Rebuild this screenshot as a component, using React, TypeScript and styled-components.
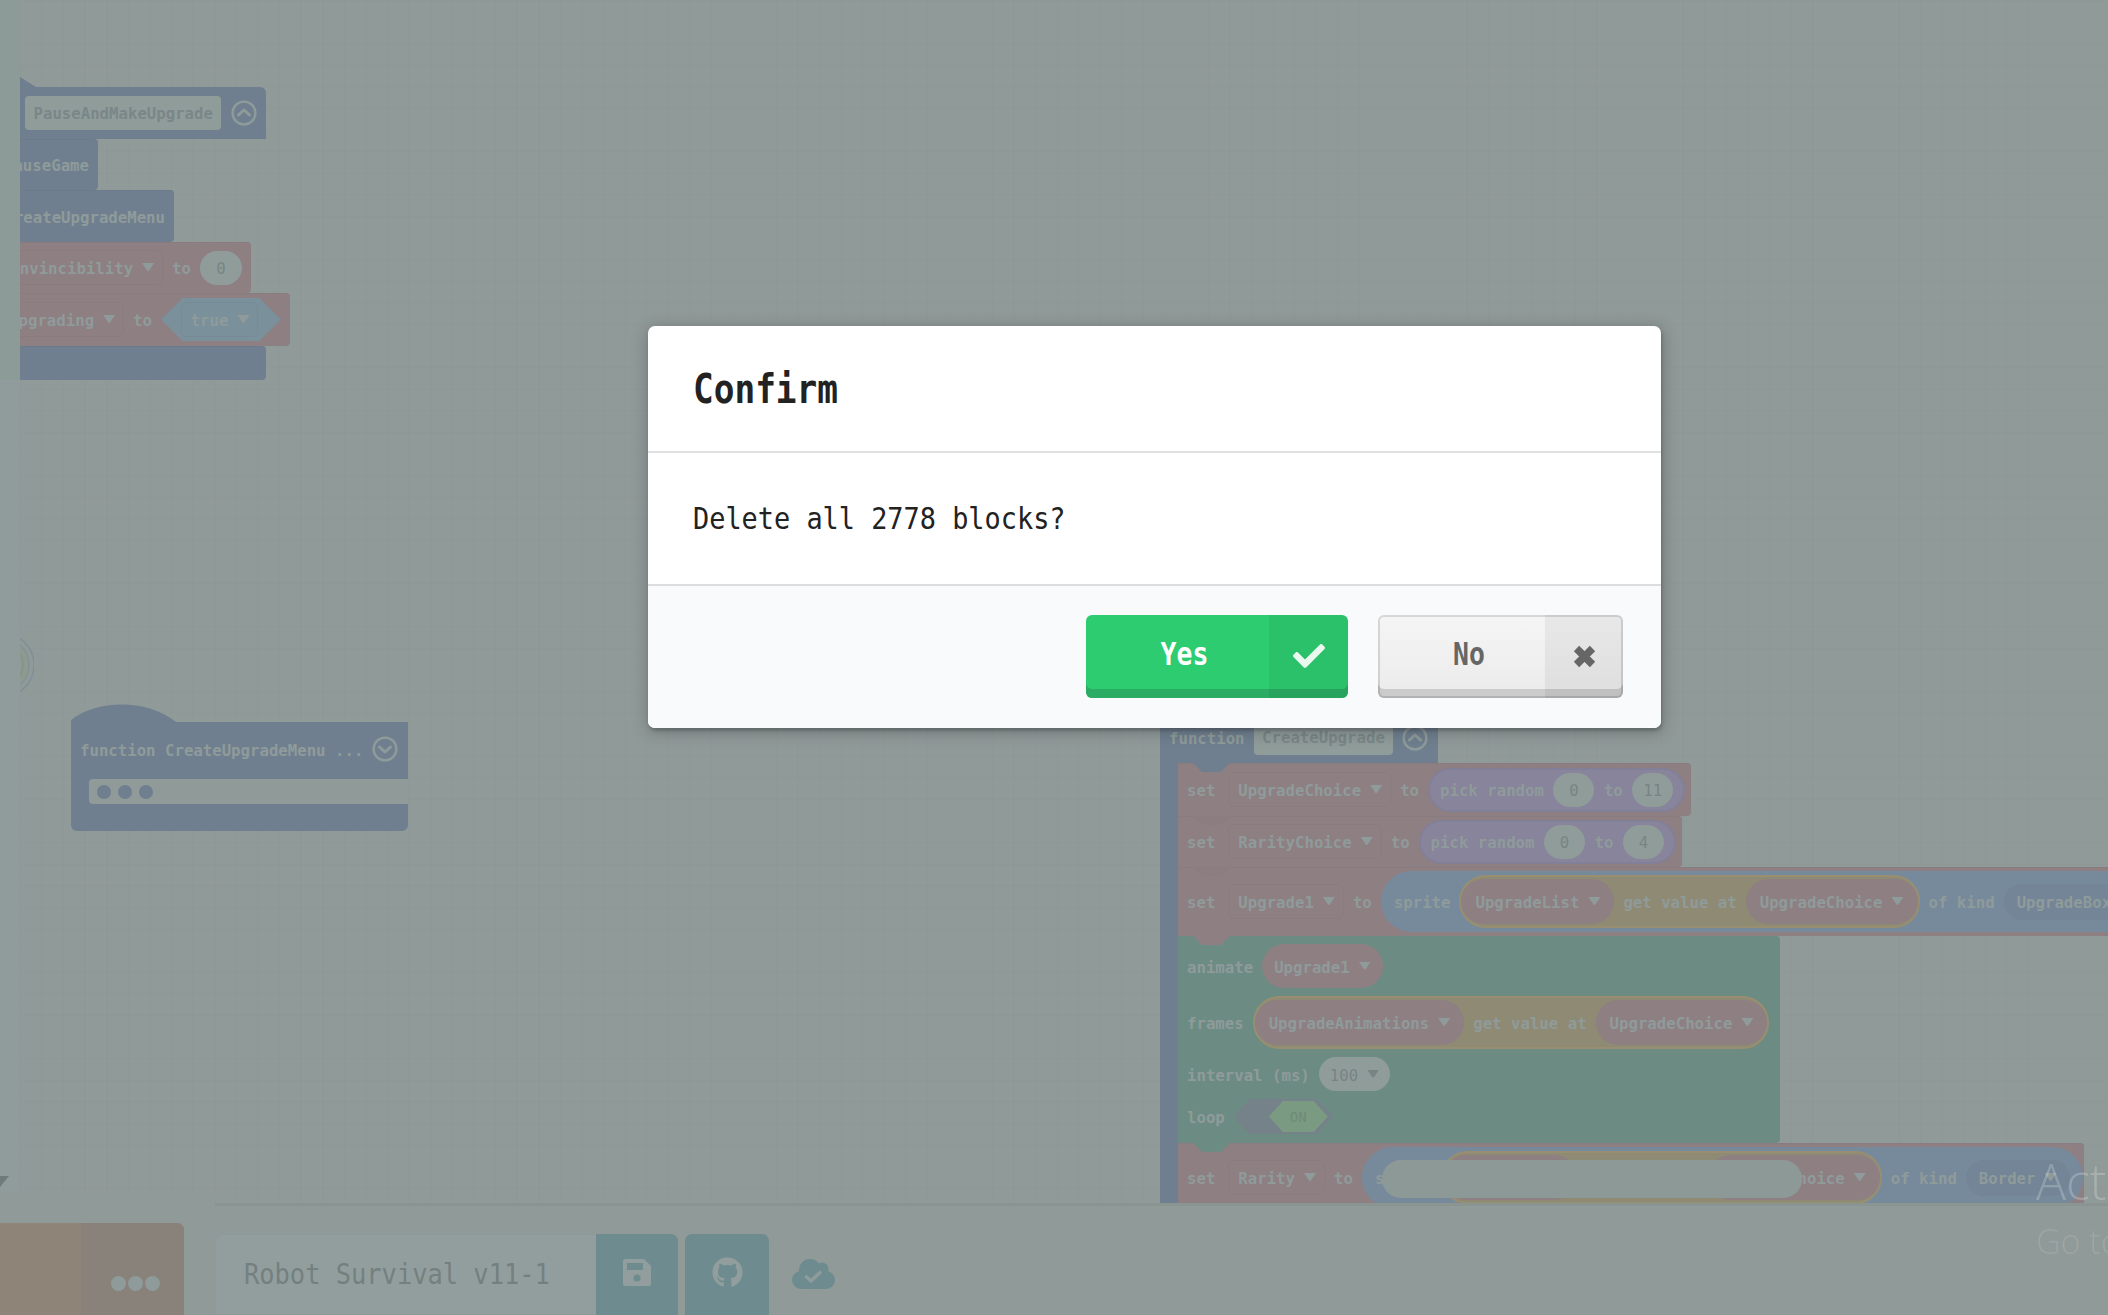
import React from 'react';
import styled, { createGlobalStyle } from 'styled-components';
import { FaCheck, FaGithub } from 'react-icons/fa';

const C = {
  bg: '#909a98',
  blue: '#6f7f8f',
  red: '#8e7f83',
  redEdge: '#8c7d81',
  teal: '#6c8b83',
  yellow: '#8f8a74',
  yellowEdge: '#988f72',
  purple: '#87849b',
  purpleEdge: '#827f98',
  sprite: '#778a9b',
  spriteDark: '#738596',
  hex: '#7a909a',
  field: '#909c9a',
  text: '#8f9b9a',
  textDark: '#788483',
  btn: '#6e8c8f',
};

const Global = createGlobalStyle`
  html, body { margin: 0; padding: 0; background: ${C.bg}; overflow: hidden; }
`;

const Page = styled.div`
  position: relative;
  width: 2108px;
  height: 1315px;
  overflow: hidden;
  display: flex;
  flex-direction: column;
  background: ${C.bg};
`;

const Workspace = styled.div`
  position: relative;
  display: flex;
  height: 1203px;
  flex-shrink: 0;
`;

const Strip = styled.div`
  width: 20px;
  flex-shrink: 0;
  display: flex;
  flex-direction: column;
`;
const StripTop = styled.div`
  height: 380px;
  background: #8d9b98;
`;
const StripBottom = styled.div`
  flex: 1;
  background: #8f9c9b;
`;
const Corner = styled.div`
  position: absolute;
  left: 0;
  top: 1176px;
  width: 9px;
  height: 11px;
  background: #707a7a;
  clip-path: polygon(0 0, 100% 0, 0 100%);
`;

const Canvas = styled.div`
  position: relative;
  flex: 1;
  overflow: hidden;
  font: bold 15.7px "DejaVu Sans Mono", monospace;
  color: ${C.text};
  background-color: ${C.bg};
  background-image: linear-gradient(rgba(0, 0, 0, 0.014) 1px, transparent 1px),
    linear-gradient(90deg, rgba(0, 0, 0, 0.014) 1px, transparent 1px);
  background-size: 21.6px 21.6px;
`;

const Placed = styled.div<{ $x: number; $y: number }>`
  position: absolute;
  left: ${p => p.$x}px;
  top: ${p => p.$y}px;
  display: flex;
  flex-direction: column;
  align-items: flex-start;
`;

const Head = styled.div<{ $h: number }>`
  position: relative;
  display: flex;
  align-items: center;
  gap: 9px;
  height: ${p => p.$h}px;
  padding: 0 10px 0 9px;
  background: ${C.blue};
  border-radius: 0 6px 0 0;
  white-space: nowrap;
`;
const HeadFlush = styled(Head)`
  padding-left: 5px;
  padding-right: 9px;
  gap: 10px;
`;
const HatTip = styled.div`
  position: absolute;
  left: 0;
  top: -10px;
  width: 16px;
  height: 10px;
  background: ${C.blue};
  clip-path: polygon(0 0, 100% 100%, 0 100%);
`;
const HatSvg = styled.svg`
  position: absolute;
  left: 0;
  top: -18px;
  display: block;
`;

const NameField = styled.span`
  display: flex;
  align-items: center;
  height: 34px;
  padding: 0 8.5px;
  background: ${C.field};
  border-radius: 4px;
  color: #7a8688;
`;

const ToggleSvg = styled.svg`
  flex-shrink: 0;
  display: block;
`;

function Toggle({ down }: { down?: boolean }) {
  return (
    <ToggleSvg width="26" height="26" viewBox="0 0 26 26" fill="none" stroke={C.text} strokeWidth="2.4" strokeLinecap="round" strokeLinejoin="round">
      <circle cx="13" cy="13" r="11.4" />
      <path d={down ? 'M7.5 11l5.5 5 5.5-5' : 'M7.5 15l5.5-5 5.5 5'} strokeWidth="3" />
    </ToggleSvg>
  );
}

const Stmt = styled.div<{ $c: string; $h: number; $w?: number; $end?: boolean }>`
  position: relative;
  display: flex;
  align-items: center;
  justify-content: ${p => (p.$end ? 'flex-end' : 'flex-start')};
  gap: 9px;
  flex-shrink: 0;
  height: ${p => p.$h}px;
  width: ${p => (p.$w ? `${p.$w}px` : 'fit-content')};
  padding: ${p => (p.$end ? '0 9px 0 0' : '0 6px 0 9px')};
  box-sizing: border-box;
  background: ${p => p.$c};
  border-radius: 0 4px 4px 0;
  box-shadow: inset 0 1px 0 rgba(0, 0, 0, 0.03);
  white-space: nowrap;
`;

const Notch = styled.div<{ $c: string }>`
  position: absolute;
  left: 15px;
  top: 0;
  width: 37px;
  height: 9px;
  background: ${p => p.$c};
  clip-path: polygon(0 0, 100% 0, 75% 100%, 25% 100%);
`;

const Lbl = styled.span`
  flex-shrink: 0;
  padding-top: 2px;
`;
const DarkLbl = styled(Lbl)`
  color: ${C.textDark};
  font-weight: normal;
`;

const Caret = styled.span<{ $dark?: boolean }>`
  flex-shrink: 0;
  width: 12px;
  height: 8px;
  margin-top: -1px;
  background: ${p => (p.$dark ? C.textDark : C.text)};
  clip-path: polygon(0 0, 100% 0, 55% 100%, 45% 100%);
`;

const Drop = styled.span`
  display: flex;
  align-items: center;
  gap: 9px;
  flex-shrink: 0;
  height: 35px;
  padding: 0 8px 0 9px;
  margin-left: 4px;
  box-sizing: border-box;
  border: 1px solid rgba(0, 0, 0, 0.03);
  border-radius: 6px;
`;
const HexDrop = styled(Drop)`
  margin: 0 3px 0 0;
`;

const Pill = styled.span<{ $bg: string; $h: number; $edge?: string; $pad?: number; $gap?: number }>`
  display: flex;
  align-items: center;
  gap: ${p => p.$gap ?? 9}px;
  flex-shrink: 0;
  height: ${p => p.$h}px;
  padding: 0 ${p => p.$pad ?? 14}px;
  box-sizing: border-box;
  background: ${p => p.$bg};
  border: ${p => (p.$edge ? `2px solid ${p.$edge}` : 'none')};
  border-radius: ${p => p.$h / 2}px;
`;

const Num = styled.span<{ $w?: number }>`
  display: flex;
  align-items: center;
  justify-content: center;
  flex-shrink: 0;
  width: ${p => p.$w ?? 41}px;
  height: 34px;
  padding-top: 1px;
  box-sizing: border-box;
  background: ${C.field};
  border-radius: 17px;
  color: ${C.textDark};
  font-weight: normal;
`;

const HexPill = styled.span`
  display: flex;
  align-items: center;
  justify-content: center;
  flex-shrink: 0;
  width: 120px;
  height: 43px;
  background: ${C.hex};
  clip-path: polygon(0 50%, 18% 0, 82% 0, 100% 50%, 82% 100%, 18% 100%);
`;

const Spine = styled.div`
  border-left: 18px solid ${C.blue};
  display: flex;
  flex-direction: column;
  align-items: flex-start;
`;

const TealBlock = styled.div`
  position: relative;
  display: flex;
  flex-direction: column;
  gap: 8px;
  padding: 8px 11px 9px 9px;
  background: ${C.teal};
  border-radius: 0 4px 4px 0;
`;
const TealRow = styled.div<{ $h: number }>`
  display: flex;
  align-items: center;
  gap: 9px;
  height: ${p => p.$h}px;
  white-space: nowrap;
`;

const LoopToggle = styled.span`
  position: relative;
  display: block;
  flex-shrink: 0;
  width: 99px;
  height: 35px;
  background: #76828a;
  clip-path: polygon(0 50%, 16% 0, 84% 0, 100% 50%, 84% 100%, 16% 100%);
`;
const LoopKnob = styled.span`
  position: absolute;
  left: 35px;
  top: 2px;
  width: 59px;
  height: 31px;
  display: flex;
  align-items: center;
  justify-content: center;
  background: #7a9b82;
  color: #6f8a78;
  font-weight: normal;
  font-size: 14px;
  clip-path: polygon(0 50%, 24% 0, 76% 0, 100% 50%, 76% 100%, 24% 100%);
`;

const Bubble = styled.div`
  position: absolute;
  left: 204px;
  top: 17px;
  width: 420px;
  height: 38px;
  border-radius: 19px;
  background: #8d9997;
`;

const Collapsed = styled.div`
  display: flex;
  flex-direction: column;
  width: 337px;
  background: ${C.blue};
  border-radius: 0 0 6px 6px;
`;
const CollapsedHead = styled(Head)`
  box-sizing: border-box;
  padding-bottom: 3px;
`;
const CollapsedGap = styled.div`
  display: flex;
  align-items: center;
  gap: 7px;
  margin-left: 18px;
  height: 25px;
  padding-left: 8px;
  background: ${C.bg};
  border-radius: 4px 0 0 4px;
`;
const Dot = styled.span`
  width: 14px;
  height: 14px;
  border-radius: 50%;
  background: ${C.blue};
`;
const Tail = styled.div`
  height: 27px;
`;

const LeftRing = styled.svg`
  position: absolute;
  left: 0;
  top: 638px;
  display: block;
`;

const Footer = styled.div`
  flex: 1;
  display: flex;
  min-height: 0;
`;
const LeftTools = styled.div`
  position: relative;
  width: 215px;
  flex-shrink: 0;
  margin-top: -11px;
  padding-top: 31px;
  box-sizing: border-box;
  background: ${C.bg};
`;
const OrangeButton = styled.div`
  display: flex;
  width: 184px;
  height: 92px;
  border-radius: 0 7px 0 0;
  overflow: hidden;
  background: #8e8478;
`;
const OrangeMain = styled.div`
  width: 81px;
  flex-shrink: 0;
`;
const OrangeMore = styled.div`
  flex: 1;
  display: flex;
  justify-content: center;
  gap: 2px;
  padding: 53px 0 0 6px;
  background: #88827b;
`;
const MoreDot = styled.span`
  width: 15px;
  height: 15px;
  border-radius: 50%;
  background: #8e9b9a;
`;

const Bar = styled.div`
  flex: 1;
  display: flex;
  align-items: stretch;
  padding-top: 28px;
  border-top: 3px solid #8a9491;
`;
const NameInput = styled.div`
  display: flex;
  align-items: center;
  width: 381px;
  padding-left: 28px;
  box-sizing: border-box;
  background: #929e9d;
  border: 1px solid rgba(0, 0, 0, 0.025);
  border-right: none;
  border-radius: 8px 0 0 0;
`;
const NameText = styled.span`
  display: inline-block;
  font: 28px "DejaVu Sans Mono", monospace;
  color: #748080;
  transform: scaleX(0.907);
  transform-origin: left center;
  white-space: nowrap;
`;
const ToolButton = styled.div<{ $w: number; $gap?: number; $round?: string }>`
  display: flex;
  align-items: center;
  justify-content: center;
  width: ${p => p.$w}px;
  margin-left: ${p => p.$gap ?? 0}px;
  padding-bottom: 5px;
  box-sizing: border-box;
  background: ${C.btn};
  color: #929e9d;
  border-radius: ${p => p.$round ?? '0 7px 0 0'};
`;
const CloudBox = styled.div`
  display: flex;
  align-items: center;
  margin-left: 23px;
  padding-bottom: 2px;
`;

const Watermark = styled.div`
  position: absolute;
  left: 2036px;
  top: 1147px;
  width: 900px;
  font-family: "Open Sans", sans-serif;
  font-weight: 300;
`;
const WatermarkTitle = styled.div`
  font-size: 50px;
  line-height: 68px;
  color: rgba(255, 255, 255, 0.22);
`;
const WatermarkSub = styled.div`
  margin-top: 3px;
  font-size: 34px;
  line-height: 46px;
  color: rgba(255, 255, 255, 0.13);
`;

const DialogWrap = styled.div`
  position: absolute;
  left: 0;
  top: 0;
  width: 100%;
  height: 100%;
`;
const Dialog = styled.div`
  position: absolute;
  left: 648px;
  top: 326px;
  width: 1013px;
  height: 402px;
  display: flex;
  flex-direction: column;
  background: #fff;
  border-radius: 7px;
  overflow: hidden;
  box-shadow: 1px 3px 3px 0 rgba(34, 36, 38, 0.25), 1px 3px 15px 2px rgba(34, 36, 38, 0.25);
`;
const DialogHeader = styled.div`
  display: flex;
  align-items: center;
  height: 125px;
  padding-left: 45px;
  flex-shrink: 0;
  border-bottom: 2px solid #e0e1e2;
`;
const Title = styled.span`
  display: inline-block;
  font: bold 40px "DejaVu Sans Mono", monospace;
  color: #222;
  transform: scaleX(0.86);
  transform-origin: left center;
`;
const DialogBody = styled.div`
  display: flex;
  align-items: center;
  height: 131px;
  padding-left: 45px;
  flex-shrink: 0;
`;
const Message = styled.span`
  display: inline-block;
  font: 29.5px "DejaVu Sans Mono", monospace;
  color: #222;
  transform: scaleX(0.912);
  transform-origin: left center;
  white-space: nowrap;
`;
const DialogFooter = styled.div`
  flex: 1;
  display: flex;
  justify-content: flex-end;
  gap: 30px;
  padding: 29px 38px 0 0;
  background: #f9fafb;
  border-top: 2px solid #dcddde;
`;
const ActionButton = styled.div<{ $w: number; $variant: 'yes' | 'no' }>`
  display: flex;
  width: ${p => p.$w}px;
  height: 83px;
  border-radius: 6px;
  overflow: hidden;
  color: ${p => (p.$variant === 'yes' ? '#fff' : '#666')};
  background: ${p => (p.$variant === 'yes' ? '#2ecc71' : 'linear-gradient(#f5f5f5, #ebebeb)')};
  box-shadow: ${p =>
    p.$variant === 'yes'
      ? 'inset 0 -9px 0 #2bac64'
      : 'inset 0 0 0 2px rgba(0, 0, 0, 0.12), inset 0 -9px 0 #cbcbcb'};
`;
const ActionLabel = styled.div`
  flex: 1;
  display: flex;
  align-items: center;
  justify-content: center;
  padding: 0 0 5px 14px;
`;
const ActionText = styled.span`
  display: inline-block;
  font: bold 31.5px "DejaVu Sans Mono", monospace;
  transform: scaleX(0.84);
`;
const ActionIcon = styled.div<{ $w: number; $c: string }>`
  display: flex;
  align-items: center;
  justify-content: center;
  width: ${p => p.$w}px;
  padding-bottom: 1px;
  background: rgba(0, 0, 0, 0.05);
  color: ${p => p.$c};
`;

function VarPill({ name }: { name: string }) {
  return (
    <Pill $bg={C.red} $h={45}>
      <Lbl>{name}</Lbl>
      <Caret />
    </Pill>
  );
}

function DropField({ name }: { name: string }) {
  return (
    <Drop>
      <Lbl>{name}</Lbl>
      <Caret />
    </Drop>
  );
}

function PickRandom({ max }: { max: string }) {
  return (
    <Pill $bg={C.purple} $edge={C.purpleEdge} $h={44} $pad={10} $gap={9.5}>
      <Lbl>pick random</Lbl>
      <Num>0</Num>
      <Lbl>to</Lbl>
      <Num>{max}</Num>
    </Pill>
  );
}

function GetValue({ list, index }: { list: string; index: string }) {
  return (
    <Pill $bg={C.yellow} $edge={C.yellowEdge} $h={53} $pad={0} $gap={9}>
      <VarPill name={list} />
      <Lbl>get value at</Lbl>
      <VarPill name={index} />
    </Pill>
  );
}

function SpriteOf({ list, index, kind }: { list: string; index: string; kind: string }) {
  return (
    <Pill $bg={C.sprite} $h={61} $pad={13} $gap={9}>
      <Lbl>sprite</Lbl>
      <GetValue list={list} index={index} />
      <Lbl>of kind</Lbl>
      <Pill $bg={C.spriteDark} $h={36} $pad={13}>
        <Lbl>{kind}</Lbl>
        <Caret />
      </Pill>
    </Pill>
  );
}

export default function App() {
  return (
    <Page>
      <Global />
      <Workspace>
        <Strip>
          <StripTop />
          <StripBottom />
        </Strip>
        <Canvas>
          <Placed $x={0} $y={87}>
            <HeadFlush $h={52}>
              <HatTip />
              <NameField>PauseAndMakeUpgrade</NameField>
              <Toggle />
            </HeadFlush>
            <Stmt $c={C.blue} $h={51} $w={78} $end>
              <Lbl>pauseGame</Lbl>
            </Stmt>
            <Stmt $c={C.blue} $h={52} $w={154} $end>
              <Lbl>CreateUpgradeMenu</Lbl>
            </Stmt>
            <Stmt $c={C.red} $h={51} $w={231} $end>
              <DropField name="Invincibility" />
              <Lbl>to</Lbl>
              <Num $w={42}>0</Num>
            </Stmt>
            <Stmt $c={C.red} $h={53} $w={270} $end>
              <DropField name="Upgrading" />
              <Lbl>to</Lbl>
              <HexPill>
                <HexDrop>
                  <Lbl>true</Lbl>
                  <Caret />
                </HexDrop>
              </HexPill>
            </Stmt>
            <Stmt $c={C.blue} $h={34} $w={246} $end />
          </Placed>

          <LeftRing width="14" height="54" viewBox="0 0 14 54" fill="none">
            <circle cx="-18" cy="27" r="32" stroke="#7f9098" strokeWidth="1.5" />
            <circle cx="-18" cy="27" r="27" fill="#8e9a8e" stroke="#82929a" strokeWidth="1.5" />
            <circle cx="-18" cy="27" r="21" stroke="#84948e" strokeWidth="1.5" />
          </LeftRing>

          <Placed $x={51} $y={722}>
            <Collapsed>
              <CollapsedHead $h={57}>
                <HatSvg width="105" height="18" viewBox="0 0 105 18">
                  <path d="M0 16C25-4 75-6 105 18L0 18Z" fill={C.blue} />
                </HatSvg>
                <Lbl>function CreateUpgradeMenu ...</Lbl>
                <Toggle down />
              </CollapsedHead>
              <CollapsedGap>
                <Dot />
                <Dot />
                <Dot />
              </CollapsedGap>
              <Tail />
            </Collapsed>
          </Placed>

          <Placed $x={1140} $y={712}>
            <Head $h={51}>
              <Lbl>function</Lbl>
              <NameField>CreateUpgrade</NameField>
              <Toggle />
            </Head>
            <Spine>
              <Stmt $c={C.red} $h={53}>
                <Notch $c={C.blue} />
                <Lbl>set</Lbl>
                <DropField name="UpgradeChoice" />
                <Lbl>to</Lbl>
                <PickRandom max="11" />
              </Stmt>
              <Stmt $c={C.red} $h={51}>
                <Notch $c={C.redEdge} />
                <Lbl>set</Lbl>
                <DropField name="RarityChoice" />
                <Lbl>to</Lbl>
                <PickRandom max="4" />
              </Stmt>
              <Stmt $c={C.red} $h={69}>
                <Notch $c={C.redEdge} />
                <Lbl>set</Lbl>
                <DropField name="Upgrade1" />
                <Lbl>to</Lbl>
                <SpriteOf list="UpgradeList" index="UpgradeChoice" kind="UpgradeBox" />
              </Stmt>
              <TealBlock>
                <Notch $c={C.red} />
                <TealRow $h={44}>
                  <Lbl>animate</Lbl>
                  <Pill $bg={C.red} $h={44} $pad={12}>
                    <Lbl>Upgrade1</Lbl>
                    <Caret />
                  </Pill>
                </TealRow>
                <TealRow $h={53}>
                  <Lbl>frames</Lbl>
                  <GetValue list="UpgradeAnimations" index="UpgradeChoice" />
                </TealRow>
                <TealRow $h={34}>
                  <Lbl>interval (ms)</Lbl>
                  <Pill $bg={C.field} $h={34} $pad={11}>
                    <DarkLbl>100</DarkLbl>
                    <Caret $dark />
                  </Pill>
                </TealRow>
                <TealRow $h={35}>
                  <Lbl>loop</Lbl>
                  <LoopToggle>
                    <LoopKnob>ON</LoopKnob>
                  </LoopToggle>
                </TealRow>
              </TealBlock>
              <Stmt $c={C.red} $h={69} $w={906}>
                <Notch $c={C.teal} />
                <Lbl>set</Lbl>
                <DropField name="Rarity" />
                <Lbl>to</Lbl>
                <SpriteOf list="BorderMap" index="UpgradeChoice" kind="Border" />
                <Bubble />
              </Stmt>
            </Spine>
          </Placed>
        </Canvas>
        <Corner />
      </Workspace>

      <Footer>
        <LeftTools>
          <OrangeButton>
            <OrangeMain />
            <OrangeMore>
              <MoreDot />
              <MoreDot />
              <MoreDot />
            </OrangeMore>
          </OrangeButton>
        </LeftTools>
        <Bar>
          <NameInput>
            <NameText>Robot Survival v11-1</NameText>
          </NameInput>
          <ToolButton $w={82}>
            <svg width="28" height="27" viewBox="0 0 28 27">
              <path d="M2 0H21L28 7V25a2 2 0 0 1-2 2H2a2 2 0 0 1-2-2V2a2 2 0 0 1 2-2Z" fill="#929e9d" />
              <rect x="4" y="4" width="16" height="7" fill={C.btn} />
              <circle cx="14" cy="19" r="3.6" fill={C.btn} />
            </svg>
          </ToolButton>
          <ToolButton $w={84} $gap={7} $round="7px 7px 0 0">
            <FaGithub size={31} />
          </ToolButton>
          <CloudBox>
            <svg width="43" height="30" viewBox="0 0 43 30">
              <g fill={C.btn}>
                <circle cx="18" cy="11" r="11" />
                <circle cx="30" cy="10" r="6.5" />
                <circle cx="9" cy="21" r="9" />
                <circle cx="34" cy="21" r="9" />
                <rect x="9" y="14" width="25" height="16" />
              </g>
              <path d="M13.5 17l5.5 5 10-9.5" fill="none" stroke="#8f9c9b" strokeWidth="3.2" />
            </svg>
          </CloudBox>
        </Bar>
      </Footer>

      <Watermark>
        <WatermarkTitle>Activate Windows</WatermarkTitle>
        <WatermarkSub>Go to Settings to activate Windows.</WatermarkSub>
      </Watermark>

      <DialogWrap>
        <Dialog>
          <DialogHeader>
            <Title>Confirm</Title>
          </DialogHeader>
          <DialogBody>
            <Message>Delete all 2778 blocks?</Message>
          </DialogBody>
          <DialogFooter>
            <ActionButton $w={262} $variant="yes">
              <ActionLabel>
                <ActionText>Yes</ActionText>
              </ActionLabel>
              <ActionIcon $w={79} $c="#e9f9ef">
                <FaCheck size={32} />
              </ActionIcon>
            </ActionButton>
            <ActionButton $w={245} $variant="no">
              <ActionLabel>
                <ActionText>No</ActionText>
              </ActionLabel>
              <ActionIcon $w={78} $c="#666">
                <svg width="25" height="25" viewBox="0 0 25 25" fill="none" stroke="currentColor" strokeWidth="7.5" strokeLinejoin="round">
                  <path d="M4.5 4.5L20.5 20.5M20.5 4.5L4.5 20.5" />
                </svg>
              </ActionIcon>
            </ActionButton>
          </DialogFooter>
        </Dialog>
      </DialogWrap>
    </Page>
  );
}
